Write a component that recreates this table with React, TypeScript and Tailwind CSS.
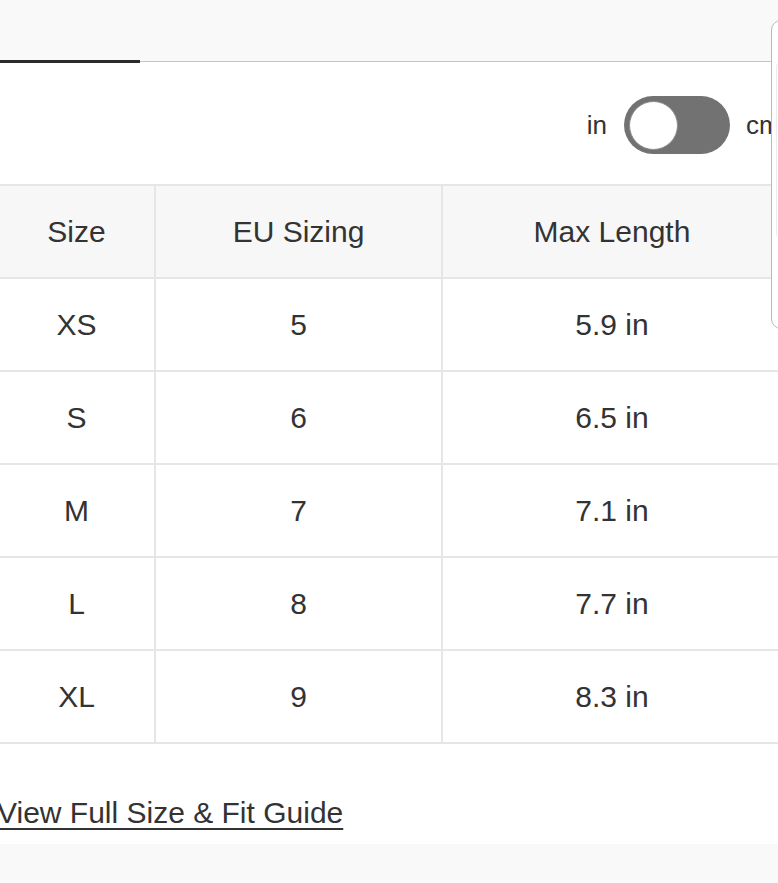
import React from "react";

const rows = [
  { size: "XS", eu: "5", len: "5.9 in" },
  { size: "S", eu: "6", len: "6.5 in" },
  { size: "M", eu: "7", len: "7.1 in" },
  { size: "L", eu: "8", len: "7.7 in" },
  { size: "XL", eu: "9", len: "8.3 in" },
];

export default function App() {
  return (
    <div
      className="relative h-[883px] w-[778px] overflow-hidden bg-white text-[#333]"
      style={{ fontFamily: '"Liberation Sans", Arial, sans-serif' }}
    >
      {/* tabs bar */}
      <div className="h-[61px] bg-[#f9f9f9]" />
      <div className="relative h-[1px] bg-[#c4c4c4]">
        <div className="absolute left-0 top-[-1px] h-[3px] w-[140px] bg-[#2b2b2b]" />
      </div>

      {/* unit toggle */}
      <div className="flex h-[122px] items-center justify-end pt-[4px]">
        <span className="text-[26px] leading-none">in</span>
        <div className="ml-[17px] flex h-[58px] w-[106px] items-center rounded-full bg-[#727272] pl-[5px]">
          <div className="h-[49px] w-[49px] rounded-full border border-[#8a8a8a] bg-white" />
        </div>
        <span className="ml-[16px] w-[32px] text-[26px] leading-none">cm</span>
      </div>

      {/* size table */}
      <div className="ml-[-1px] w-[782px] border-t-2 border-[#e6e6e6] text-[30px]">
        <div className="grid h-[93px] grid-cols-[157px_287px_338px] border-b-2 border-[#e6e6e6] bg-[#f7f7f7]">
          <div className="flex items-center justify-center border-r-2 border-[#e6e6e6]">Size</div>
          <div className="flex items-center justify-center border-r-2 border-[#e6e6e6]">EU Sizing</div>
          <div className="flex items-center justify-center">Max Length</div>
        </div>
        {rows.map((r) => (
          <div
            key={r.size}
            className="grid h-[93px] grid-cols-[157px_287px_338px] border-b-2 border-[#e6e6e6]"
          >
            <div className="flex items-center justify-center border-r-2 border-[#e6e6e6]">{r.size}</div>
            <div className="flex items-center justify-center border-r-2 border-[#e6e6e6]">{r.eu}</div>
            <div className="flex items-center justify-center">{r.len}</div>
          </div>
        ))}
      </div>

      {/* guide link */}
      <div className="ml-[-3px] flex h-[100px] items-end pb-[16px]">
        <a className="text-[30px] leading-none underline decoration-2 underline-offset-[5px]">
          View Full Size &amp; Fit Guide
        </a>
      </div>
      <div className="h-[40px] bg-[#f9f9f9]" />

      {/* floating side panel edge */}
      <div className="absolute left-[771px] top-[20px] h-[309px] w-[30px] rounded-l-[10px] border border-[#b9b9b9] bg-white">
        <div className="absolute left-[4px] top-[40px] h-[178px] w-[30px] rounded-l-[6px] border border-[#ececec]" />
      </div>
    </div>
  );
}
